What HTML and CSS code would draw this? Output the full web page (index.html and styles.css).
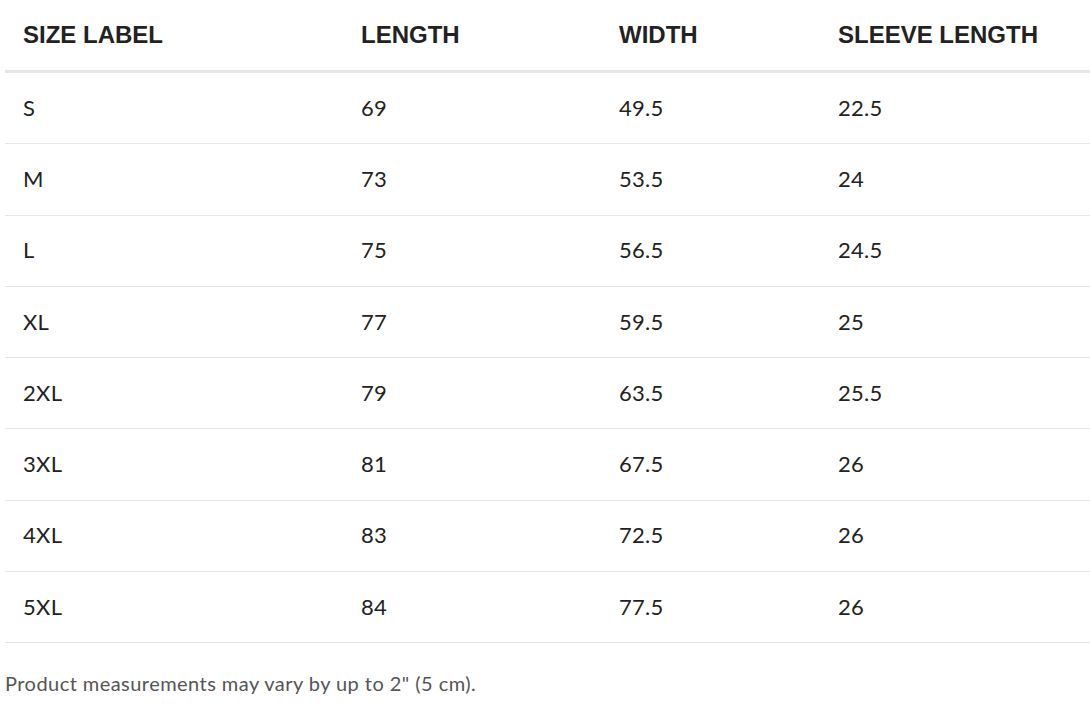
FILE: index.html
```html
<!DOCTYPE html>
<html>
<head>
<meta charset="utf-8">
<link rel="stylesheet" href="styles.css">
</head>
<body>
<div class="wrap">
<table class="sizes">
<colgroup>
<col class="c1"><col class="c2"><col class="c3"><col class="c4">
</colgroup>
<thead>
<tr><th>SIZE LABEL</th><th>LENGTH</th><th>WIDTH</th><th>SLEEVE LENGTH</th></tr>
</thead>
<tbody>
<tr><td>S</td><td>69</td><td>49.5</td><td>22.5</td></tr>
<tr><td>M</td><td>73</td><td>53.5</td><td>24</td></tr>
<tr><td>L</td><td>75</td><td>56.5</td><td>24.5</td></tr>
<tr><td>XL</td><td>77</td><td>59.5</td><td>25</td></tr>
<tr><td>2XL</td><td>79</td><td>63.5</td><td>25.5</td></tr>
<tr><td>3XL</td><td>81</td><td>67.5</td><td>26</td></tr>
<tr><td>4XL</td><td>83</td><td>72.5</td><td>26</td></tr>
<tr><td>5XL</td><td>84</td><td>77.5</td><td>26</td></tr>
</tbody>
</table>
<p class="note">Product measurements may vary by up to 2" (5 cm).</p>
</div>
</body>
</html>
```
FILE: styles.css
```css
html, body { margin: 0; padding: 0; background: #fff; }
.wrap { padding-left: 5px; }
.sizes {
  width: 1085px;
  border-collapse: collapse;
  table-layout: fixed;
}
.c1 { width: 338px; }
.c2 { width: 258px; }
.c3 { width: 219px; }
.c4 { width: 270px; }
.sizes th {
  font-family: "Liberation Sans", Arial, sans-serif;
  font-weight: bold;
  font-size: 24px;
  color: #222;
  text-align: left;
  padding: 0 0 0 18px;
  height: 70px;
  border-bottom: 3px solid #e5e5e5;
}
.sizes td {
  font-family: Lato, sans-serif;
  font-size: 22px;
  letter-spacing: 0.3px;
  color: #222;
  padding: 0 0 2px 18px;
  height: 68.3px;
  border-bottom: 1px solid #e5e5e5;
}
.note {
  font-family: Lato, sans-serif;
  font-size: 20px;
  letter-spacing: 0.45px;
  color: #555;
  margin: 28px 0 0 0;
}
```
